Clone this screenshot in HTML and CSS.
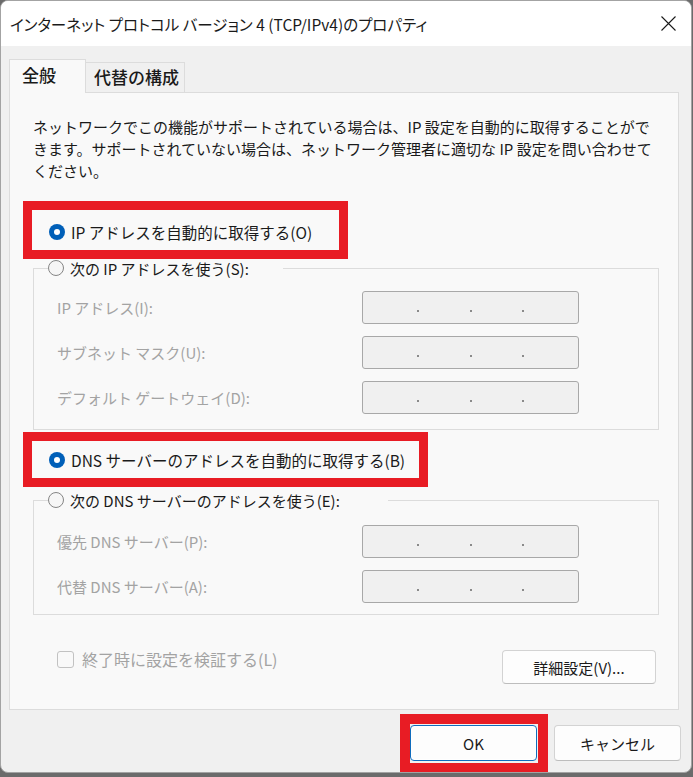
FILE: index.html
```html
<!DOCTYPE html>
<html lang="ja">
<head>
    <meta charset="UTF-8" />
    <meta name="viewport" content="width=device-width, initial-scale=1.0"/>
    <title>インターネット プロトコル バージョン 4 (TCP/IPv4)のプロパティ</title>
    <link rel="stylesheet" href="styles.css">
</head>
<body>
<div class="window">
    <div class="titlebar">
        <span class="title">インターネット プロトコル バージョン 4 (TCP/IPv4)のプロパティ</span>
        <svg class="close" width="15" height="15" viewBox="0 0 15 15">
            <path d="M0.5 0.5 L14.5 14.5 M14.5 0.5 L0.5 14.5" stroke="#1a1a1a" stroke-width="1.1" fill="none"/>
        </svg>
    </div>

    <div class="body">
        <div class="tabs">
            <div class="tab tab-active">全般</div>
            <div class="tab">代替の構成</div>
        </div>

        <div class="panel">
            <p class="desc">ネットワークでこの機能がサポートされている場合は、IP 設定を自動的に取得することがで<br>きます。サポートされていない場合は、ネットワーク管理者に適切な IP 設定を問い合わせて<br>ください。</p>

            <div class="option option-ip">
                <span class="radio radio-on"></span>IP アドレスを自動的に取得する(O)
            </div>

            <fieldset class="group group-ip">
                <legend class="legend legend-ip"><span class="radio"></span>次の IP アドレスを使う(S):</legend>
                <div class="field">
                    <span class="field-label">IP アドレス(I):</span>
                    <div class="ip-box"><i></i><i></i><i></i></div>
                </div>
                <div class="field">
                    <span class="field-label">サブネット マスク(U):</span>
                    <div class="ip-box"><i></i><i></i><i></i></div>
                </div>
                <div class="field">
                    <span class="field-label">デフォルト ゲートウェイ(D):</span>
                    <div class="ip-box"><i></i><i></i><i></i></div>
                </div>
            </fieldset>

            <div class="option option-dns">
                <span class="radio radio-on"></span>DNS サーバーのアドレスを自動的に取得する(B)
            </div>

            <fieldset class="group group-dns">
                <legend class="legend legend-dns"><span class="radio"></span>次の DNS サーバーのアドレスを使う(E):</legend>
                <div class="field">
                    <span class="field-label">優先 DNS サーバー(P):</span>
                    <div class="ip-box"><i></i><i></i><i></i></div>
                </div>
                <div class="field">
                    <span class="field-label">代替 DNS サーバー(A):</span>
                    <div class="ip-box"><i></i><i></i><i></i></div>
                </div>
            </fieldset>

            <div class="panel-foot">
                <div class="check"><span class="checkbox"></span>終了時に設定を検証する(L)</div>
                <button class="btn btn-advanced">詳細設定(V)...</button>
            </div>
        </div>

        <div class="footer">
            <button class="btn btn-ok">OK</button>
            <button class="btn">キャンセル</button>
        </div>
    </div>

    <!-- red annotation frames -->
    <div class="mark mark-ip"></div>
    <div class="mark mark-dns"></div>
    <div class="mark mark-ok"></div>
</div>
</body>
</html>
```

FILE: styles.css
```css
html, body {
    margin: 0;
    padding: 0;
}

body {
    background-color: #6b6b6b;
    font-family: "Noto Sans CJK JP", "Noto Sans", sans-serif;
    font-size: 15px;
    color: #1a1a1a;
}

.window {
    position: relative;
    box-sizing: border-box;
    width: 692px;
    height: 773px;
    background-color: #f0f0f0;
    border: 1px solid #a3a3a3;
    border-radius: 8px;
    overflow: hidden;
}

.titlebar {
    height: 45px;
    background-color: #fff;
    display: flex;
    align-items: center;
    justify-content: space-between;
    padding: 0 15px 0 9px;
}

.title {
    font-size: 15.5px;
    line-height: 22px;
    font-feature-settings: "palt";
}

.close {
    display: block;
}

.body {
    padding: 0 12px 0 8px;
}

.tabs {
    display: flex;
    align-items: flex-end;
    height: 34px;
    margin-top: 13px;
    margin-bottom: -1px;
    position: relative;
    z-index: 1;
}

.tab {
    box-sizing: border-box;
    height: 30px;
    width: 100px;
    margin-left: -1px;
    margin-bottom: 1px;
    padding-left: 8px;
    border: 1px solid #dcdcdc;
    border-bottom: none;
    background-color: #f0f0f0;
    font-size: 17px;
    line-height: 28px;
    font-weight: 500;
}

.tab-active {
    height: 34px;
    width: 77px;
    margin-left: 0;
    margin-bottom: 0;
    padding-left: 12px;
    background-color: #f9f9f9;
    line-height: 30px;
}

.panel {
    box-sizing: border-box;
    width: 670px;
    height: 618px;
    background-color: #f9f9f9;
    border: 1px solid #dcdcdc;
    padding: 23px 20px 0 23px;
}

.desc {
    margin: 0;
    line-height: 22px;
    white-space: nowrap;
}

.option {
    display: flex;
    align-items: center;
    gap: 6px;
    height: 22px;
    padding-left: 16px;
    font-size: 15.5px;
    white-space: nowrap;
}

.option-ip {
    margin-top: 39px;
}

.option-dns {
    margin-top: 19px;
}

.radio {
    box-sizing: border-box;
    flex: none;
    width: 16px;
    height: 16px;
    border-radius: 50%;
    border: 1px solid #858585;
    background-color: #f6f6f6;
}

.radio-on {
    border: none;
    background-color: #005fb8;
    position: relative;
}

.radio-on::after {
    content: "";
    position: absolute;
    left: 5px;
    top: 5px;
    width: 6px;
    height: 6px;
    border-radius: 50%;
    background-color: #fff;
}

.group {
    box-sizing: border-box;
    width: 626px;
    min-width: 0;
    margin: 14px 0 0 0;
    border: 1px solid #dcdcdc;
    display: flex;
    flex-direction: column;
    gap: 12px;
}

.group-ip {
    margin-top: 14px;
    padding: 12px 0 15px 14px;
}

.group-dns {
    margin-top: 18px;
    padding: 14px 0 11px 14px;
}

.legend {
    display: flex;
    align-items: center;
    gap: 6px;
    height: 22px;
    padding: 0;
    white-space: nowrap;
}

.legend-ip {
    width: 235px;
}

.legend-dns {
    width: 340px;
}

.field {
    display: grid;
    grid-template-columns: 305px 217px;
    align-items: center;
    padding-left: 9px;
}

.field-label {
    color: #a3a3a3;
    white-space: nowrap;
}

.ip-box {
    box-sizing: border-box;
    height: 33px;
    border: 1px solid #a8a8a8;
    border-radius: 3px;
    background-color: #f0f0f0;
    display: grid;
    grid-template-columns: 56px 53px 52px;
    align-items: end;
    padding-bottom: 11px;
}

.ip-box i {
    display: block;
    justify-self: end;
    width: 2px;
    height: 2px;
    background-color: #8a8a8a;
}

.panel-foot {
    display: flex;
    justify-content: space-between;
    align-items: flex-start;
    margin-top: 33px;
    padding: 0 2px 0 24px;
}

.check {
    display: flex;
    align-items: center;
    gap: 8px;
    height: 22px;
    font-size: 16px;
    color: #a3a3a3;
    white-space: nowrap;
}

.checkbox {
    box-sizing: border-box;
    width: 17px;
    height: 17px;
    border: 1px solid #c2c2c2;
    border-radius: 3px;
    background-color: #f9f9f9;
}

.btn {
    box-sizing: border-box;
    height: 36px;
    width: 127px;
    background-color: #fdfdfd;
    border: 1px solid #d3d3d3;
    border-bottom-color: #bdbdbd;
    border-radius: 4px;
    font-family: inherit;
    font-size: 15px;
    color: #1a1a1a;
    padding: 0;
}

.btn-advanced {
    width: 154px;
    height: 34px;
    margin-top: 2px;
}

.btn-ok {
    border: 1px solid #0f6cbd;
    box-shadow: inset 0 0 0 1px #fff;
}

.footer {
    display: flex;
    justify-content: flex-end;
    gap: 17px;
    margin-top: 15px;
    margin-right: -2px;
}

.mark {
    position: absolute;
    box-sizing: border-box;
    border: 9px solid #e81c24;
}

.mark-ip {
    left: 22px;
    top: 200px;
    width: 325px;
    height: 58px;
}

.mark-dns {
    left: 22px;
    top: 431px;
    width: 405px;
    height: 55px;
}

.mark-ok {
    left: 399px;
    top: 713px;
    width: 148px;
    height: 59px;
    border-width: 10px;
}
```
